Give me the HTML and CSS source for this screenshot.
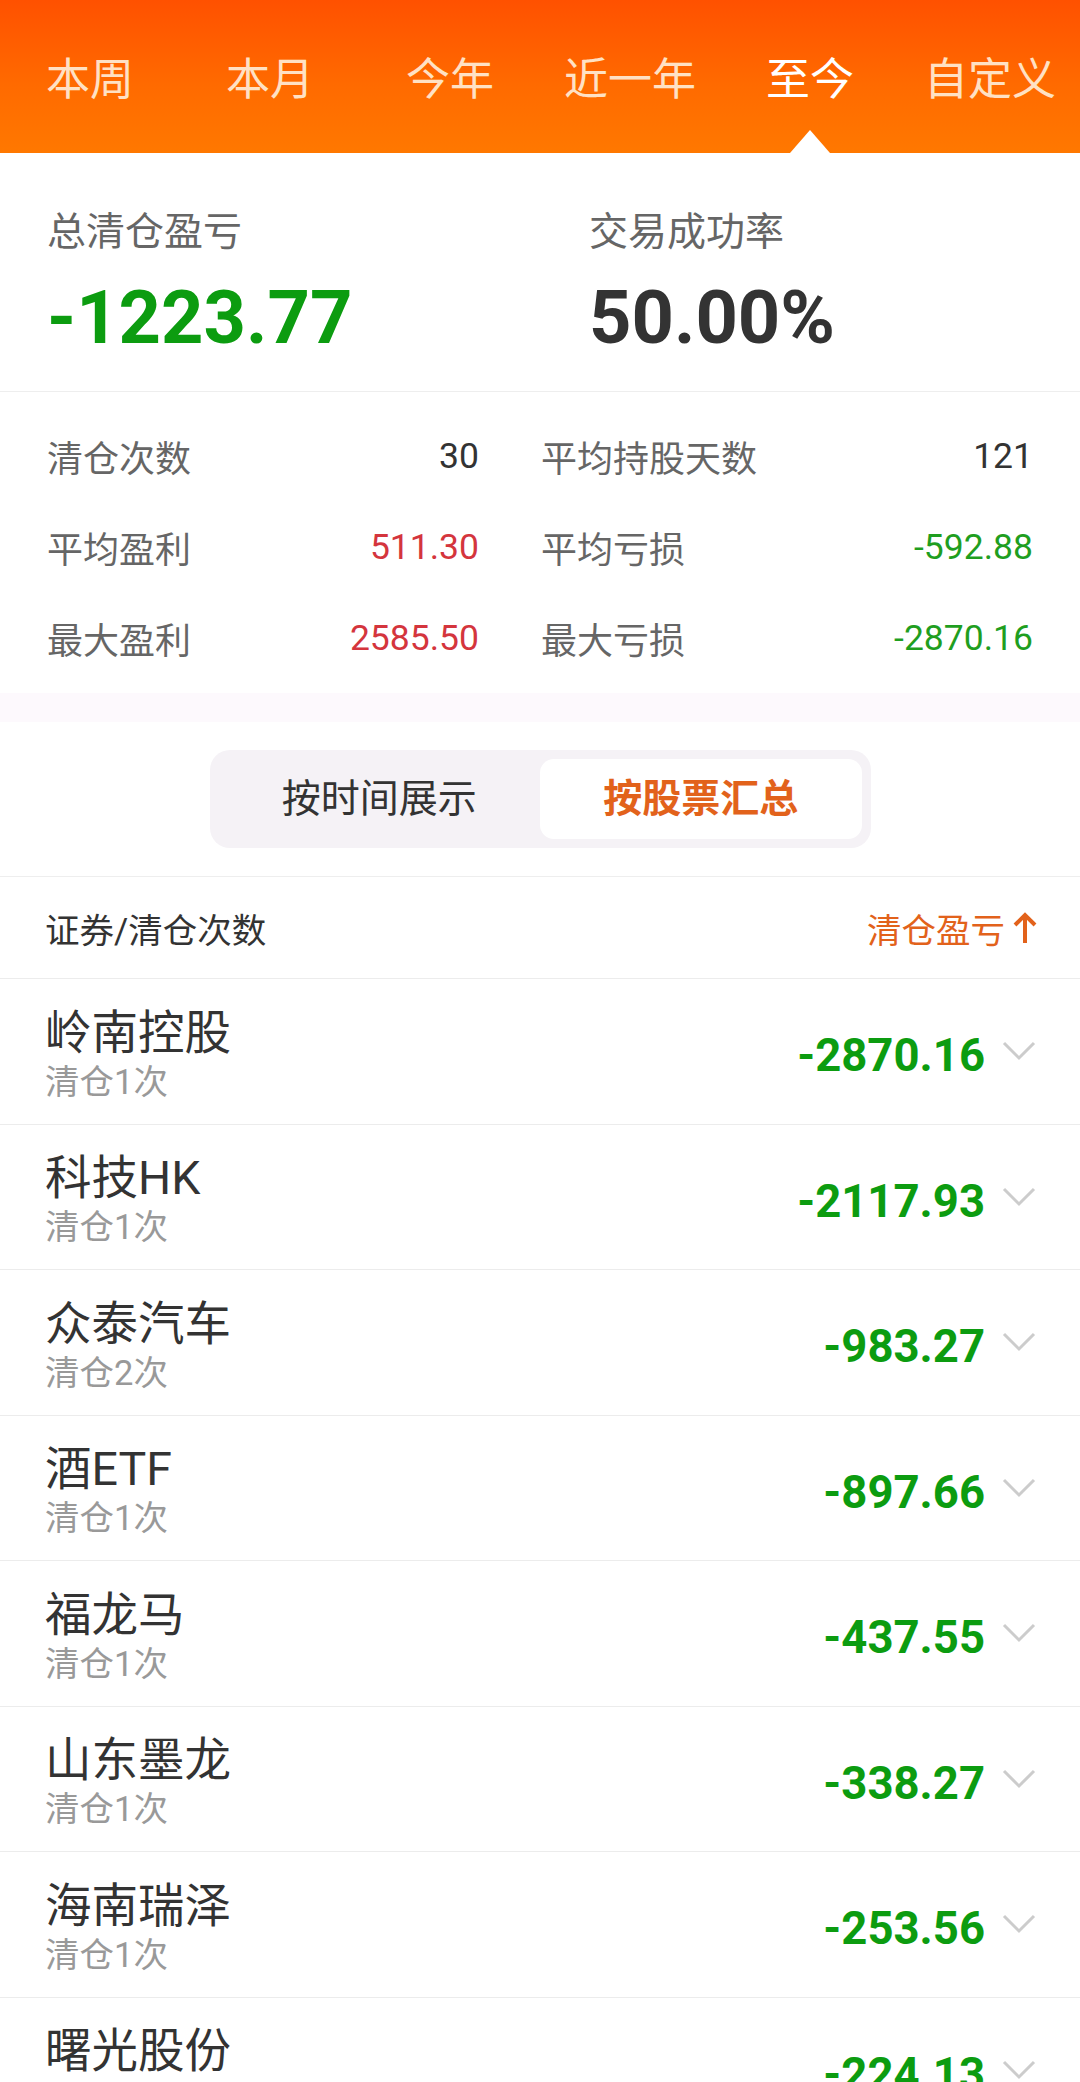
FILE: index.html
```html
<!DOCTYPE html>
<html lang="zh-CN">
<head>
<meta charset="utf-8">
<title>清仓盈亏</title>
<link rel="stylesheet" href="styles.css">
</head>
<body>
<div class="header">
  <div class="tab">本周</div>
  <div class="tab">本月</div>
  <div class="tab">今年</div>
  <div class="tab">近一年</div>
  <div class="tab active">至今</div>
  <div class="tab">自定义</div>
</div>

<div class="summary">
  <div class="sum-col">
    <div class="sum-label">总清仓盈亏</div>
    <div class="sum-value green">-1223.77</div>
  </div>
  <div class="sum-col">
    <div class="sum-label">交易成功率</div>
    <div class="sum-value dark">50.00%</div>
  </div>
</div>

<div class="stats">
  <div class="stat"><span class="stat-label">清仓次数</span><span class="stat-value">30</span></div>
  <div class="stat"><span class="stat-label">平均持股天数</span><span class="stat-value">121</span></div>
  <div class="stat"><span class="stat-label">平均盈利</span><span class="stat-value red">511.30</span></div>
  <div class="stat"><span class="stat-label">平均亏损</span><span class="stat-value lgreen">-592.88</span></div>
  <div class="stat"><span class="stat-label">最大盈利</span><span class="stat-value red">2585.50</span></div>
  <div class="stat"><span class="stat-label">最大亏损</span><span class="stat-value lgreen">-2870.16</span></div>
</div>

<div class="band"></div>

<div class="seg-wrap">
  <div class="seg">
    <div class="seg-item">按时间展示</div>
    <div class="seg-item active">按股票汇总</div>
  </div>
</div>

<div class="list-head">
  <span>证券/清仓次数</span>
  <span class="sort">清仓盈亏<svg class="arrow" width="24" height="32" viewBox="0 0 24 32"><path d="M12 31V3M2 13L12 3L22 13" fill="none" stroke="#e2621b" stroke-width="4" stroke-linejoin="miter"/></svg></span>
</div>

<div class="list">
  <div class="row">
    <div class="info"><div class="name">岭南控股</div><div class="sub">清仓1次</div></div>
    <div class="amount">-2870.16</div>
    <svg class="chev" width="34" height="20" viewBox="0 0 34 20"><polyline points="2,2 17,17 32,2" fill="none" stroke="#cccccc" stroke-width="3"/></svg>
  </div>
  <div class="row">
    <div class="info"><div class="name">科技HK</div><div class="sub">清仓1次</div></div>
    <div class="amount">-2117.93</div>
    <svg class="chev" width="34" height="20" viewBox="0 0 34 20"><polyline points="2,2 17,17 32,2" fill="none" stroke="#cccccc" stroke-width="3"/></svg>
  </div>
  <div class="row">
    <div class="info"><div class="name">众泰汽车</div><div class="sub">清仓2次</div></div>
    <div class="amount">-983.27</div>
    <svg class="chev" width="34" height="20" viewBox="0 0 34 20"><polyline points="2,2 17,17 32,2" fill="none" stroke="#cccccc" stroke-width="3"/></svg>
  </div>
  <div class="row">
    <div class="info"><div class="name">酒ETF</div><div class="sub">清仓1次</div></div>
    <div class="amount">-897.66</div>
    <svg class="chev" width="34" height="20" viewBox="0 0 34 20"><polyline points="2,2 17,17 32,2" fill="none" stroke="#cccccc" stroke-width="3"/></svg>
  </div>
  <div class="row">
    <div class="info"><div class="name">福龙马</div><div class="sub">清仓1次</div></div>
    <div class="amount">-437.55</div>
    <svg class="chev" width="34" height="20" viewBox="0 0 34 20"><polyline points="2,2 17,17 32,2" fill="none" stroke="#cccccc" stroke-width="3"/></svg>
  </div>
  <div class="row">
    <div class="info"><div class="name">山东墨龙</div><div class="sub">清仓1次</div></div>
    <div class="amount">-338.27</div>
    <svg class="chev" width="34" height="20" viewBox="0 0 34 20"><polyline points="2,2 17,17 32,2" fill="none" stroke="#cccccc" stroke-width="3"/></svg>
  </div>
  <div class="row">
    <div class="info"><div class="name">海南瑞泽</div><div class="sub">清仓1次</div></div>
    <div class="amount">-253.56</div>
    <svg class="chev" width="34" height="20" viewBox="0 0 34 20"><polyline points="2,2 17,17 32,2" fill="none" stroke="#cccccc" stroke-width="3"/></svg>
  </div>
  <div class="row">
    <div class="info"><div class="name">曙光股份</div><div class="sub">清仓1次</div></div>
    <div class="amount">-224.13</div>
    <svg class="chev" width="34" height="20" viewBox="0 0 34 20"><polyline points="2,2 17,17 32,2" fill="none" stroke="#cccccc" stroke-width="3"/></svg>
  </div>
</div>
</body>
</html>
```
FILE: styles.css
```css
* { box-sizing: border-box; }
html, body { margin: 0; padding: 0; }
body {
  width: 1080px;
  background: #ffffff;
  font-family: Roboto, "Noto Sans CJK SC", sans-serif;
  color: #333333;
  overflow: hidden;
}

/* header tabs */
.header {
  display: flex;
  height: 153px;
  background: linear-gradient(180deg, #ff5100 0%, #ff6a00 55%, #ff7800 100%);
}
.tab {
  position: relative;
  flex: 1;
  text-align: center;
  font-size: 44px;
  line-height: 60px;
  padding-top: 50px;
  color: #ffe1c4;
}
.tab.active { color: #ffffff; }
.tab.active::after {
  content: "";
  position: absolute;
  left: 50%;
  bottom: 0;
  margin-left: -20px;
  border-left: 20px solid transparent;
  border-right: 20px solid transparent;
  border-bottom: 23px solid #ffffff;
}

/* summary */
.summary {
  display: grid;
  grid-template-columns: 542px 1fr;
  padding: 54px 47px 28px;
  border-bottom: 1px solid #eeeeee;
}
.sum-label {
  font-size: 39px;
  line-height: 50px;
  color: #666666;
}
.sum-value {
  margin-top: 15px;
  font-size: 74px;
  line-height: 91px;
  font-weight: 700;
}
.green { color: #0c9c10; }
.dark { color: #333333; }

/* stats */
.stats {
  display: grid;
  grid-template-columns: 432px 492px;
  column-gap: 62px;
  padding: 18px 47px 10px;
}
.stat {
  display: flex;
  justify-content: space-between;
  align-items: center;
  height: 91px;
}
.stat-label {
  font-size: 36px;
  color: #666666;
}
.stat-value {
  font-size: 35.5px;
  color: #333333;
}
.red { color: #d4353d; }
.lgreen { color: #1f9e1f; }

.band {
  height: 29px;
  background: #fdf9fd;
}

/* segmented control */
.seg-wrap {
  display: flex;
  justify-content: center;
  padding: 28px 0;
  border-bottom: 1px solid #eeeeee;
}
.seg {
  display: flex;
  width: 661px;
  height: 98px;
  padding: 9px;
  background: #f5f2f6;
  border-radius: 20px;
}
.seg-item {
  flex: 1;
  text-align: center;
  font-size: 39px;
  line-height: 80px;
  color: #333333;
  border-radius: 14px;
}
.seg-item.active {
  background: #ffffff;
  color: #e2621b;
  font-weight: 700;
}

/* list header */
.list-head {
  display: flex;
  justify-content: space-between;
  align-items: center;
  height: 102px;
  padding: 0 43px 0 45px;
  border-bottom: 1px solid #ececec;
  font-size: 34.5px;
  color: #333333;
}
.sort {
  display: flex;
  align-items: center;
  color: #e2621b;
}
.arrow { margin-left: 8px; }

/* list rows */
.row {
  display: flex;
  align-items: center;
  height: 145.5px;
  padding: 0 44px 0 45px;
  border-bottom: 1px solid #ececec;
}
.info {
  flex: 1;
  margin-top: 9px;
}
.name {
  font-size: 46.5px;
  line-height: 52px;
  color: #333333;
}
.sub {
  font-size: 34.5px;
  line-height: 46px;
  color: #999999;
}
.amount {
  margin-top: 9px;
  font-size: 45.5px;
  font-weight: 700;
  color: #0c9c10;
}
.chev {
  margin-left: 17px;
  flex: none;
}
```
